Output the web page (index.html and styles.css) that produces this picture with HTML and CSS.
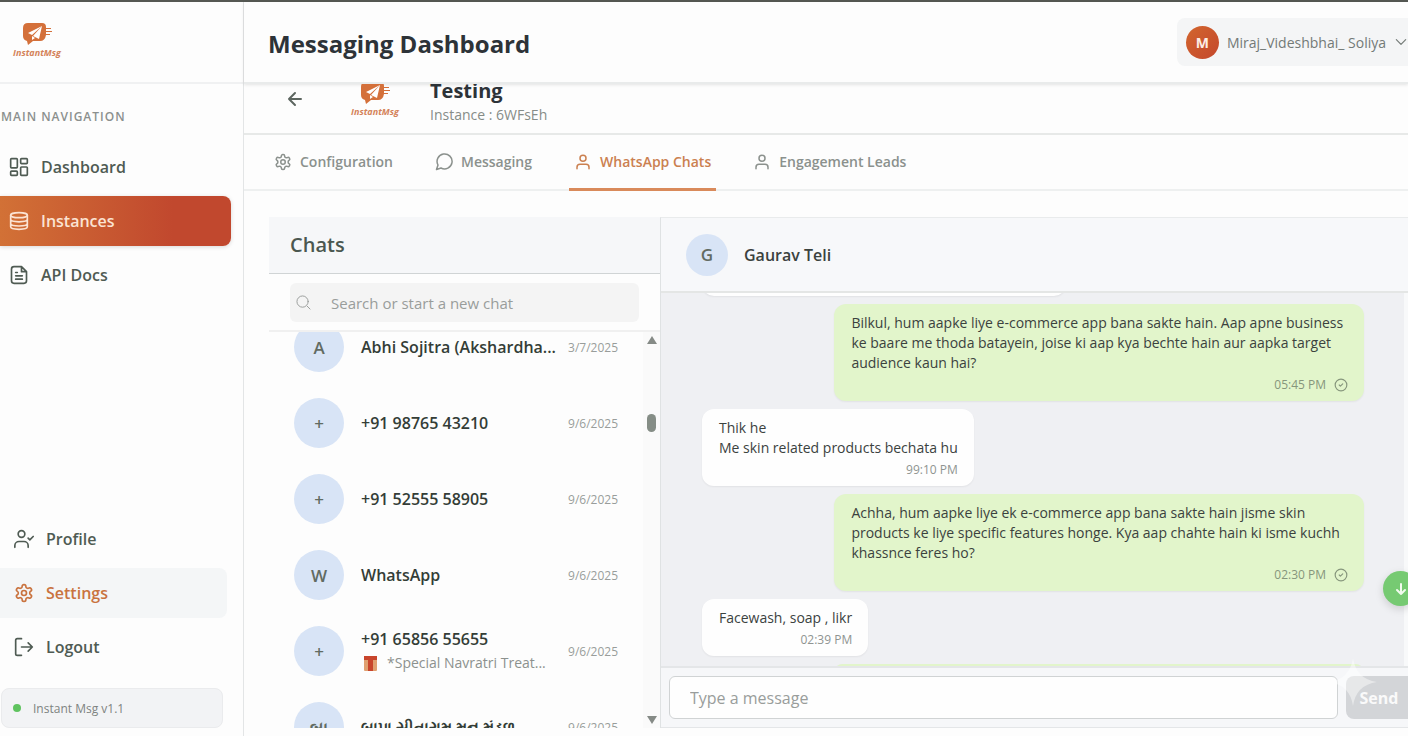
FILE: index.html
```html
<!DOCTYPE html>
<html lang="en">
<head>
  <meta charset="UTF-8">
  <title>Messaging Dashboard</title>
  <meta name="viewport" content="width=device-width, initial-scale=1.0">
  <link rel="stylesheet" href="styles.css">
</head>
<body>
  <!-- shared icons -->
  <svg class="sprite" aria-hidden="true">
    <symbol id="icon-logo" viewBox="0 0 32 24">
      <path fill="#d4703a" d="M7 1h14q4 0 4 4v1h5v1h-5v2h6v1h-6v2h4v1h-4q-1 6-6 6h-7l-5 4-1-4q-4-1-4-5V6q0-5 5-5z"/>
      <path fill="#fff" d="M21 4 7 11l4 2zM21 4l-9 10 6 3zM11 14v4l3-2z"/>
    </symbol>
    <symbol id="icon-gear" viewBox="0 0 24 24">
      <path d="M12.22 2h-.44a2 2 0 0 0-2 2v.18a2 2 0 0 1-1 1.73l-.43.25a2 2 0 0 1-2 0l-.15-.08a2 2 0 0 0-2.73.73l-.22.38a2 2 0 0 0 .73 2.730l.15.1a2 2 0 0 1 1 1.72v.51a2 2 0 0 1-1 1.74l-.15.09a2 2 0 0 0-.73 2.73l.22.38a2 2 0 0 0 2.73.73l.15-.08a2 2 0 0 1 2 0l.43.25a2 2 0 0 1 1 1.73V20a2 2 0 0 0 2 2h.44a2 2 0 0 0 2-2v-.18a2 2 0 0 1 1-1.73l.43-.25a2 2 0 0 1 2 0l.15.08a2 2 0 0 0 2.73-.73l.22-.39a2 2 0 0 0-.73-2.73l-.15-.08a2 2 0 0 1-1-1.74v-.5a2 2 0 0 1 1-1.74l.15-.09a2 2 0 0 0 .73-2.73l-.22-.38a2 2 0 0 0-2.73-.73l-.15.08a2 2 0 0 1-2 0l-.43-.25a2 2 0 0 1-1-1.730V4a2 2 0 0 0-2-2z"/>
      <circle cx="12" cy="12" r="3"/>
    </symbol>
    <symbol id="icon-user" viewBox="0 0 24 24">
      <circle cx="12" cy="7" r="4"/>
      <path d="M4 21v-2a4 4 0 0 1 4-4h8a4 4 0 0 1 4 4v2"/>
    </symbol>
    <symbol id="icon-sent" viewBox="0 0 24 24">
      <circle cx="12" cy="12" r="10"/>
      <path d="M9 12l2 2 4-4"/>
    </symbol>
  </svg>

  <div class="app">
    <aside class="sidebar">
      <div class="brand">
        <div class="logo">
          <svg class="logo-mark"><use href="#icon-logo"/></svg>
          <span>InstantMsg</span>
        </div>
      </div>

      <nav class="side-nav">
        <h2>Main Navigation</h2>
        <a href="#">
          <svg class="icon" viewBox="0 0 24 24"><rect x="2" y="2" width="8" height="11" rx="1"/><rect x="14" y="2" width="8" height="6" rx="1"/><rect x="14" y="12" width="8" height="10" rx="1"/><rect x="2" y="17" width="8" height="5" rx="1"/></svg>
          Dashboard
        </a>
        <a href="#" class="active">
          <svg class="icon" viewBox="0 0 24 24"><ellipse cx="12" cy="5" rx="10" ry="3"/><path d="M2 5v14c0 2 4 3 10 3s10-1 10-3V5M2 10c0 2 4 3 10 3s10-1 10-3M2 15c0 2 4 3 10 3s10-1 10-3"/></svg>
          Instances
        </a>
        <a href="#">
          <svg class="icon" viewBox="0 0 24 24"><path d="M15 2H6a3 3 0 0 0-3 3v14a3 3 0 0 0 3 3h12a3 3 0 0 0 3-3V8zM15 2v6h6M8 9h2M8 13h8M8 17h8"/></svg>
          API Docs
        </a>
      </nav>

      <nav class="side-nav side-bottom">
        <a href="#">
          <svg class="icon" viewBox="0 0 24 24"><circle cx="9" cy="6" r="4"/><path d="M1 22v-2a5 5 0 0 1 5-5h6a5 5 0 0 1 5 5v2M17 11l2 2 4-4"/></svg>
          Profile
        </a>
        <a href="#" class="current">
          <svg class="icon"><use href="#icon-gear"/></svg>
          Settings
        </a>
        <a href="#">
          <svg class="icon" viewBox="0 0 24 24"><path d="M9 2H4a2 2 0 0 0-2 2v16a2 2 0 0 0 2 2h5M9 12h13M17 7l5 5-5 5"/></svg>
          Logout
        </a>
        <div class="version"><span class="dot"></span>Instant Msg v1.1</div>
      </nav>
    </aside>

    <main class="main">
      <header class="topbar">
        <h1>Messaging Dashboard</h1>
        <button class="user-menu" type="button">
          <span class="user-badge">M</span>
          Miraj_Videshbhai_ Soliya
          <svg class="chevron" viewBox="0 0 12 12"><path d="M2 4l4 4 4-4"/></svg>
        </button>
      </header>

      <section class="instance-bar">
        <button class="back" type="button" aria-label="Back">
          <svg viewBox="0 0 16 16"><path d="M14 8H2M8 2L2 8l6 6"/></svg>
        </button>
        <div class="logo">
          <svg class="logo-mark"><use href="#icon-logo"/></svg>
          <span>InstantMsg</span>
        </div>
        <div class="instance-info">
          <h2>Testing</h2>
          <p>Instance : 6WFsEh</p>
        </div>
      </section>

      <nav class="tabs">
        <a href="#"><svg class="icon"><use href="#icon-gear"/></svg>Configuration</a>
        <a href="#"><svg class="icon" viewBox="0 0 24 24"><path d="M2 22l2-6A10 10 0 1 1 8 20z"/></svg>Messaging</a>
        <a href="#" class="active"><svg class="icon"><use href="#icon-user"/></svg>WhatsApp Chats</a>
        <a href="#"><svg class="icon"><use href="#icon-user"/></svg>Engagement Leads</a>
      </nav>

      <div class="chat-app">
        <section class="chat-list">
          <h2>Chats</h2>
          <div class="search-row">
            <label class="search">
              <svg viewBox="0 0 16 16"><circle cx="7" cy="7" r="6"/><path d="M12 12l3 3"/></svg>
              <input type="text" placeholder="Search or start a new chat" aria-label="Search chats">
            </label>
          </div>
          <div class="list-wrap">
            <ul class="contacts">
              <li>
                <span class="avatar">A</span>
                <div class="who"><strong>Abhi Sojitra (Akshardha...</strong></div>
                <time>3/7/2025</time>
              </li>
              <li>
                <span class="avatar">+</span>
                <div class="who"><strong>+91 98765 43210</strong></div>
                <time>9/6/2025</time>
              </li>
              <li>
                <span class="avatar">+</span>
                <div class="who"><strong>+91 52555 58905</strong></div>
                <time>9/6/2025</time>
              </li>
              <li>
                <span class="avatar">W</span>
                <div class="who"><strong>WhatsApp</strong></div>
                <time>9/6/2025</time>
              </li>
              <li>
                <span class="avatar">+</span>
                <div class="who">
                  <strong>+91 65856 55655</strong>
                  <p>
                    <svg class="gift" viewBox="0 0 18 18"><rect x="3" y="3" width="13" height="14" rx="1" fill="#e0a070"/><path fill="#c8452c" d="M3 2h13v4h-4v11H7V6H3z"/></svg>
                    *Special Navratri Treat...
                  </p>
                </div>
                <time>9/6/2025</time>
              </li>
              <li>
                <span class="avatar">બા</span>
                <div class="who"><strong>બાપા સીતારામ મન મંડળ</strong></div>
                <time>9/6/2025</time>
              </li>
            </ul>
            <div class="scrollbar" aria-hidden="true">
              <svg viewBox="0 0 10 8"><path d="M5 0l5 8H0z"/></svg>
              <span class="thumb"></span>
              <svg viewBox="0 0 10 8"><path d="M0 0h10L5 8z"/></svg>
            </div>
          </div>
        </section>

        <section class="conversation">
          <header class="peer">
            <span class="avatar">G</span>
            <h3>Gaurav Teli</h3>
          </header>

          <div class="thread">
            <div class="messages">
              <div class="bubble previous"></div>
              <div class="bubble sent">
                <p>Bilkul, hum aapke liye e-commerce app bana sakte hain. Aap apne business<br>ke baare me thoda batayein, joise ki aap kya bechte hain aur aapka target<br>audience kaun hai?</p>
                <footer>05:45 PM <svg><use href="#icon-sent"/></svg></footer>
              </div>
              <div class="bubble">
                <p>Thik he<br>Me skin related products bechata hu</p>
                <footer>99:10 PM</footer>
              </div>
              <div class="bubble sent">
                <p>Achha, hum aapke liye ek e-commerce app bana sakte hain jisme skin<br>products ke liye specific features honge. Kya aap chahte hain ki isme kuchh<br>khassnce feres ho?</p>
                <footer>02:30 PM <svg><use href="#icon-sent"/></svg></footer>
              </div>
              <div class="bubble">
                <p>Facewash, soap , likr</p>
                <footer>02:39 PM</footer>
              </div>
              <div class="bubble sent"></div>
            </div>
            <div class="track" aria-hidden="true"></div>
            <button class="to-bottom" type="button" aria-label="Scroll to latest">
              <svg viewBox="0 0 16 16"><path d="M8 3v10M4 9l4 4 4-4"/></svg>
            </button>
          </div>

          <form class="composer">
            <input type="text" placeholder="Type a message" aria-label="Type a message">
            <button type="button">Send</button>
            <svg class="sparkle" viewBox="0 0 48 48"><path d="M24 0q3 21 24 24-21 3-24 24-3-21-24-24Q21 21 24 0z"/></svg>
          </form>
        </section>
      </div>
    </main>
  </div>
</body>
</html>
```
FILE: styles.css
```css
* {
  box-sizing: border-box;
  margin: 0;
  padding: 0;
}

body {
  background: #fdfdfd;
  color: #3b423e;
  font-family: 'Open Sans', 'Noto Sans', sans-serif;
  font-size: 14px;
  overflow: hidden;
}

button,
input {
  font: inherit;
  color: inherit;
  border: none;
  background: none;
}

button {
  cursor: pointer;
}

a {
  color: inherit;
  text-decoration: none;
}

ul {
  list-style: none;
}

svg {
  fill: none;
  stroke: currentColor;
  stroke-width: 2;
  stroke-linecap: round;
  stroke-linejoin: round;
  flex-shrink: 0;
}

.sprite {
  position: absolute;
  width: 0;
  height: 0;
}

.app {
  display: flex;
  height: 100vh;
  border-top: 2px solid #555853;
}

/* sidebar */
.sidebar {
  width: 244px;
  flex-shrink: 0;
  display: flex;
  flex-direction: column;
  border-right: 1px solid #e3e5e6;
}

.brand {
  height: 82px;
  padding: 20px 12px;
  border-bottom: 2px solid #f0f1f2;
}

.logo {
  width: 50px;
  display: flex;
  flex-direction: column;
  align-items: center;
  color: #d4835a;
  font-size: 9px;
  line-height: 14px;
  font-weight: 700;
  font-style: italic;
}

.logo-mark {
  width: 32px;
  height: 24px;
  stroke: none;
}

.side-nav {
  display: flex;
  flex-direction: column;
  gap: 4px;
  padding-right: 12px;
}

.side-nav h2 {
  padding: 24px 0 12px 1px;
  font-size: 12px;
  line-height: 18px;
  font-weight: 600;
  letter-spacing: 1px;
  text-transform: uppercase;
  color: #8b908e;
}

.side-nav a {
  display: flex;
  align-items: center;
  gap: 12px;
  height: 50px;
  padding-left: 9px;
  border-radius: 0 8px 8px 0;
  font-size: 16px;
  font-weight: 600;
  color: #4f5b53;
}

.icon {
  width: 20px;
  height: 20px;
}

.side-nav .active {
  color: #fbe3d3;
  background: linear-gradient(90deg, #d27136, #c1482e 75%);
  box-shadow: 0 1px 4px rgba(0, 0, 0, 0.15);
}

.side-bottom {
  margin-top: auto;
  padding: 0 16px 8px 0;
}

.side-bottom a {
  padding-left: 14px;
}

.side-bottom .current {
  background: #f4f6f7;
  color: #c9733f;
}

.version {
  display: flex;
  align-items: center;
  gap: 12px;
  height: 40px;
  margin: 12px 4px 0 1px;
  padding-left: 11px;
  border-radius: 8px;
  border: 1px solid #eaebed;
  background: #f2f3f5;
  font-size: 12px;
  color: #7e8381;
}

.dot {
  width: 8px;
  height: 8px;
  border-radius: 50%;
  background: #5fc35f;
}

/* header */
.main {
  flex: 1;
  min-width: 0;
  display: flex;
  flex-direction: column;
}

.topbar {
  display: flex;
  align-items: center;
  justify-content: space-between;
  height: 82px;
  flex-shrink: 0;
  padding-left: 24px;
  border-bottom: 2px solid #e9ebeb;
  box-shadow: 0 1px 3px rgba(0, 0, 0, 0.1);
}

h1 {
  padding-top: 2px;
  font-size: 24px;
  font-weight: 700;
  color: #2d3338;
}

.user-menu {
  display: flex;
  align-items: center;
  gap: 8px;
  height: 48px;
  padding: 0 0 0 9px;
  border-radius: 8px 0 0 8px;
  background: #f4f5f6;
  color: #737a76;
}

.user-badge {
  display: grid;
  place-items: center;
  width: 33px;
  height: 33px;
  border-radius: 50%;
  background: linear-gradient(135deg, #d2662e, #c4472c);
  color: #fdeee5;
  font-weight: 700;
}

.chevron {
  width: 14px;
  height: 14px;
  stroke-width: 1;
}

/* instance row, partly scrolled under the header */
.instance-bar {
  display: flex;
  align-items: flex-end;
  height: 51px;
  flex-shrink: 0;
  padding: 0 42px 7px;
  overflow: hidden;
  border-bottom: 2px solid #e7e9e8;
}

.back {
  width: 18px;
  height: 50px;
  margin-right: 46px;
  color: #5d6660;
}

.back svg {
  width: 16px;
  height: 16px;
}

.instance-bar .logo {
  margin-bottom: 7px;
}

.instance-info {
  margin-left: 30px;
}

.instance-info h2 {
  font-size: 20px;
  line-height: 26px;
  font-weight: 700;
  color: #2d3338;
}

.instance-info p {
  line-height: 22px;
  color: #868c88;
}

/* tabs */
.tabs {
  display: flex;
  gap: 32px;
  flex-shrink: 0;
  padding-left: 25px;
  border-bottom: 2px solid #eef0f0;
}

.tabs a {
  display: flex;
  align-items: center;
  gap: 8px;
  height: 56px;
  padding: 0 5px;
  margin-bottom: -2px;
  border-bottom: 3px solid transparent;
  font-weight: 600;
  color: #8b918d;
}

.tabs .icon {
  width: 18px;
  height: 18px;
}

.tabs .active {
  color: #cb8050;
  border-bottom-color: #d98a5b;
}

/* chat */
.chat-app {
  flex: 1;
  min-height: 0;
  display: flex;
  margin: 26px 0 8px 25px;
}

.chat-list {
  width: 391px;
  flex-shrink: 0;
  display: flex;
  flex-direction: column;
}

.chat-list h2 {
  padding: 0 21px;
  font-size: 20px;
  line-height: 56px;
  font-weight: 600;
  color: #4b5750;
  background: #f6f7f9;
  border-bottom: 1px solid #d0d4d5;
}

.search-row {
  padding: 9px 21px 8px;
  border-bottom: 2px solid #f0f0f0;
}

.search {
  display: flex;
  align-items: center;
  gap: 20px;
  height: 39px;
  padding: 0 6px;
  border-radius: 6px;
  background: #f4f4f4;
  color: #969a98;
}

.search svg {
  width: 15px;
  height: 15px;
  stroke-width: 1;
}

.search input {
  flex: 1;
  min-width: 0;
  font-size: 15px;
  outline: none;
}

::placeholder {
  color: #999d9b;
  opacity: 1;
}

.list-wrap {
  flex: 1;
  min-height: 0;
  display: flex;
  overflow: hidden;
}

.contacts {
  flex: 1;
  min-width: 0;
  margin-top: -23px;
}

.contacts li {
  display: flex;
  align-items: center;
  height: 76px;
  padding: 0 25px;
}

.avatar {
  display: grid;
  place-items: center;
  width: 50px;
  height: 50px;
  flex-shrink: 0;
  border-radius: 50%;
  background: #d8e4f6;
  color: #626b62;
  font-size: 17px;
  font-weight: 600;
}

.who {
  flex: 1;
  min-width: 0;
  margin: 0 12px 0 17px;
  white-space: nowrap;
}

.who strong {
  display: block;
  font-size: 16px;
  line-height: 24px;
  font-weight: 600;
  color: #343d37;
}

.who p {
  display: flex;
  align-items: center;
  gap: 8px;
  line-height: 24px;
  color: #8c918e;
}

.gift {
  width: 18px;
  height: 18px;
  stroke: none;
}

.contacts time {
  font-size: 12px;
  color: #999d9b;
}

.scrollbar {
  display: flex;
  flex-direction: column;
  align-items: center;
  width: 17px;
  padding: 4px 0;
  background: #fafafa;
}

.scrollbar svg {
  width: 10px;
  height: 8px;
  fill: #858a86;
  stroke: none;
}

.thumb {
  width: 9px;
  height: 18px;
  margin: 70px 0 auto;
  border-radius: 5px;
  background: #858d86;
}

/* conversation */
.conversation {
  flex: 1;
  min-width: 0;
  display: flex;
  flex-direction: column;
  border-left: 1px solid #dfe2e3;
  border-top: 1px solid #e9ebec;
  background: #eff0f3;
}

.peer {
  display: flex;
  align-items: center;
  gap: 16px;
  height: 75px;
  flex-shrink: 0;
  padding-left: 25px;
  background: #f7f8fa;
  border-bottom: 2px solid #e4e6e5;
}

.peer .avatar {
  width: 42px;
  height: 42px;
}

.peer h3 {
  font-size: 16px;
  font-weight: 600;
}

.thread {
  flex: 1;
  min-height: 0;
  display: flex;
  position: relative;
}

.messages {
  flex: 1;
  min-width: 0;
  display: flex;
  flex-direction: column;
  align-items: flex-start;
  gap: 8px;
  padding: 0 40px 0 41px;
  overflow: hidden;
}

.bubble {
  flex-shrink: 0;
  padding: 9px 16px 8px 17px;
  border-radius: 12px;
  background: #fefefe;
  line-height: 20px;
  box-shadow: 0 1px 2px rgba(0, 0, 0, 0.06);
}

.bubble.sent {
  align-self: flex-end;
  width: 80%;
  background: #e2f5cb;
}

.bubble.previous {
  width: 55%;
  height: 24px;
  margin-top: -21px;
}

.bubble footer {
  display: flex;
  justify-content: flex-end;
  align-items: center;
  gap: 8px;
  height: 20px;
  padding-top: 4px;
  font-size: 12px;
  color: #8f9491;
}

.bubble.sent footer {
  color: #86967c;
}

.bubble footer svg {
  width: 14px;
  height: 14px;
}

.track {
  width: 4px;
  background: #f8f9fa;
}

.to-bottom {
  position: absolute;
  right: -10px;
  bottom: 60px;
  display: grid;
  place-items: center;
  width: 35px;
  height: 35px;
  border-radius: 50%;
  background: #76ca72;
  color: #f2fbef;
  box-shadow: 0 3px 8px rgba(0, 0, 0, 0.15);
}

.to-bottom svg {
  width: 16px;
  height: 16px;
}

.composer {
  position: relative;
  display: flex;
  gap: 8px;
  height: 62px;
  flex-shrink: 0;
  padding: 8px 0 8px 8px;
  border-top: 2px solid #e4e6e8;
  border-bottom: 1px solid #e4e6e8;
  background: #f6f7f9;
}

.composer input {
  flex: 1;
  min-width: 0;
  padding: 0 20px;
  border: 1px solid #d0d3d4;
  border-radius: 6px;
  background: #fefefe;
  font-size: 16px;
  outline: none;
}

.composer button {
  width: 62px;
  padding-left: 4px;
  border-radius: 8px 0 0 8px;
  background: #d3d5d8;
  color: #fafafa;
  font-size: 16px;
  font-weight: 700;
}

.sparkle {
  position: absolute;
  right: 31px;
  top: -10px;
  width: 48px;
  height: 48px;
  fill: rgba(255, 255, 255, 0.45);
  stroke: none;
}
```
